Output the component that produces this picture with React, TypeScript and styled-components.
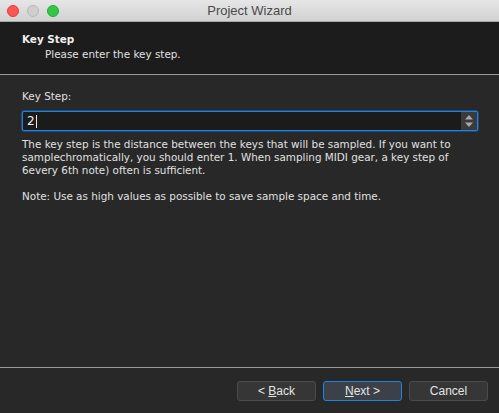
import React from "react";
import styled, { createGlobalStyle } from "styled-components";

const Global = createGlobalStyle`
  html, body { margin: 0; padding: 0; background: #282828; }
  body { font-family: "DejaVu Sans", "Liberation Sans", sans-serif; overflow: hidden; }
`;

const Window = styled.div`
  width: 499px;
  height: 413px;
  display: flex;
  flex-direction: column;
  background: #282828;
  color: #dcdcdc;
  font-size: 10.4px;
`;

const TitleBar = styled.div`
  height: 21px;
  flex: none;
  display: flex;
  align-items: center;
  position: relative;
  background: linear-gradient(#e6e6e6, #d2d2d2);
  border-bottom: 1px solid #a8a8a8;
  padding-left: 7px;
  gap: 8px;
`;

const Light = styled.span<{ $c: string; $b: string }>`
  width: 12px;
  height: 12px;
  border-radius: 50%;
  background: ${(p) => p.$c};
  box-sizing: border-box;
  border: 0.5px solid ${(p) => p.$b};
`;

const Title = styled.div`
  position: absolute;
  left: 0;
  right: 0;
  text-align: center;
  font-family: "Liberation Sans", Arial, sans-serif;
  font-size: 13px;
  color: #4a4a4a;
  pointer-events: none;
`;

const Header = styled.div`
  height: 53px;
  flex: none;
  background: #1c1c1c;
  border-bottom: 1px solid #9a9a9a;
  box-sizing: border-box;
  padding: 11px 0 0 22px;
  display: flex;
  flex-direction: column;
  gap: 2px;
`;

const HeadTitle = styled.div`
  font-weight: bold;
  color: #f0f0f0;
  line-height: 13px;
`;

const HeadSub = styled.div`
  padding-left: 23px;
  color: #e0e0e0;
  line-height: 13px;
`;

const Body = styled.div`
  flex: 1;
  padding: 15px 22px 0 22px;
  display: flex;
  flex-direction: column;
`;

const Label = styled.div`
  line-height: 13px;
  color: #e0e0e0;
  margin-bottom: 8px;
`;

const Field = styled.div`
  height: 20px;
  width: 456px;
  box-sizing: border-box;
  border: 1px solid #1b84e6;
  border-radius: 2px;
  background: #1b1b1b;
  display: flex;
  align-items: stretch;
  box-shadow: 0 0 0 0.5px #1b6cc0;
`;

const Value = styled.div`
  flex: 1;
  padding-left: 4px;
  display: flex;
  align-items: center;
  color: #f0f0f0;
  font-size: 12px;
`;

const Caret = styled.span`
  display: inline-block;
  width: 1px;
  height: 13px;
  background: #e8e8e8;
  margin-left: 1px;
`;

const Spin = styled.div`
  width: 16px;
  background: #3a3a3a;
  display: flex;
  align-items: center;
  justify-content: center;
`;

const Para = styled.p`
  margin: 7px 0 0 0;
  line-height: 13px;
  color: #e0e0e0;
  white-space: nowrap;
  & + & { margin-top: 13px; }
`;

const Footer = styled.div`
  height: 46px;
  flex: none;
  border-top: 1px solid #9a9a9a;
  display: flex;
  justify-content: flex-end;
  align-items: flex-start;
  padding: 13px 11px 0 0;
  box-sizing: border-box;
  gap: 7px;
`;

const Button = styled.button<{ $primary?: boolean }>`
  width: 79px;
  height: 20px;
  box-sizing: border-box;
  border-radius: 3px;
  border: 1px solid ${(p) => (p.$primary ? "#1b84e6" : "#4a4a4a")};
  background: ${(p) => (p.$primary ? "#3c4149" : "#363636")};
  color: #e4e4e4;
  font-family: "Liberation Sans", Arial, sans-serif;
  font-size: 12px;
  padding: 0;
  display: flex;
  align-items: center;
  justify-content: center;
  white-space: pre;
`;

const U = styled.span`
  text-decoration: underline;
`;

export default function App() {
  return (
    <>
      <Global />
      <Window>
        <TitleBar>
          <Light $c="#fc5753" $b="#df3d36" />
          <Light $c="#cfcfcf" $b="#b8b8b8" />
          <Light $c="#33c748" $b="#27a834" />
          <Title>Project Wizard</Title>
        </TitleBar>
        <Header>
          <HeadTitle>Key Step</HeadTitle>
          <HeadSub>Please enter the key step.</HeadSub>
        </Header>
        <Body>
          <Label>Key Step:</Label>
          <Field>
            <Value>
              2<Caret />
            </Value>
            <Spin>
              <svg width="10" height="14" viewBox="0 0 10 14">
                <path d="M5 1 L9 5.5 H1 Z" fill="#a8a8a8" />
                <path d="M5 13 L9 8.5 H1 Z" fill="#a8a8a8" />
              </svg>
            </Spin>
          </Field>
          <Para>
            The key step is the distance between the keys that will be sampled. If you want to
            <br />
            samplechromatically, you should enter 1. When sampling MIDI gear, a key step of
            <br />
            6every 6th note) often is sufficient.
          </Para>
          <Para>Note: Use as high values as possible to save sample space and time.</Para>
        </Body>
        <Footer>
          <Button>
            {"< "}
            <U>B</U>ack
          </Button>
          <Button $primary>
            <U>N</U>
            {"ext >"}
          </Button>
          <Button>Cancel</Button>
        </Footer>
      </Window>
    </>
  );
}
